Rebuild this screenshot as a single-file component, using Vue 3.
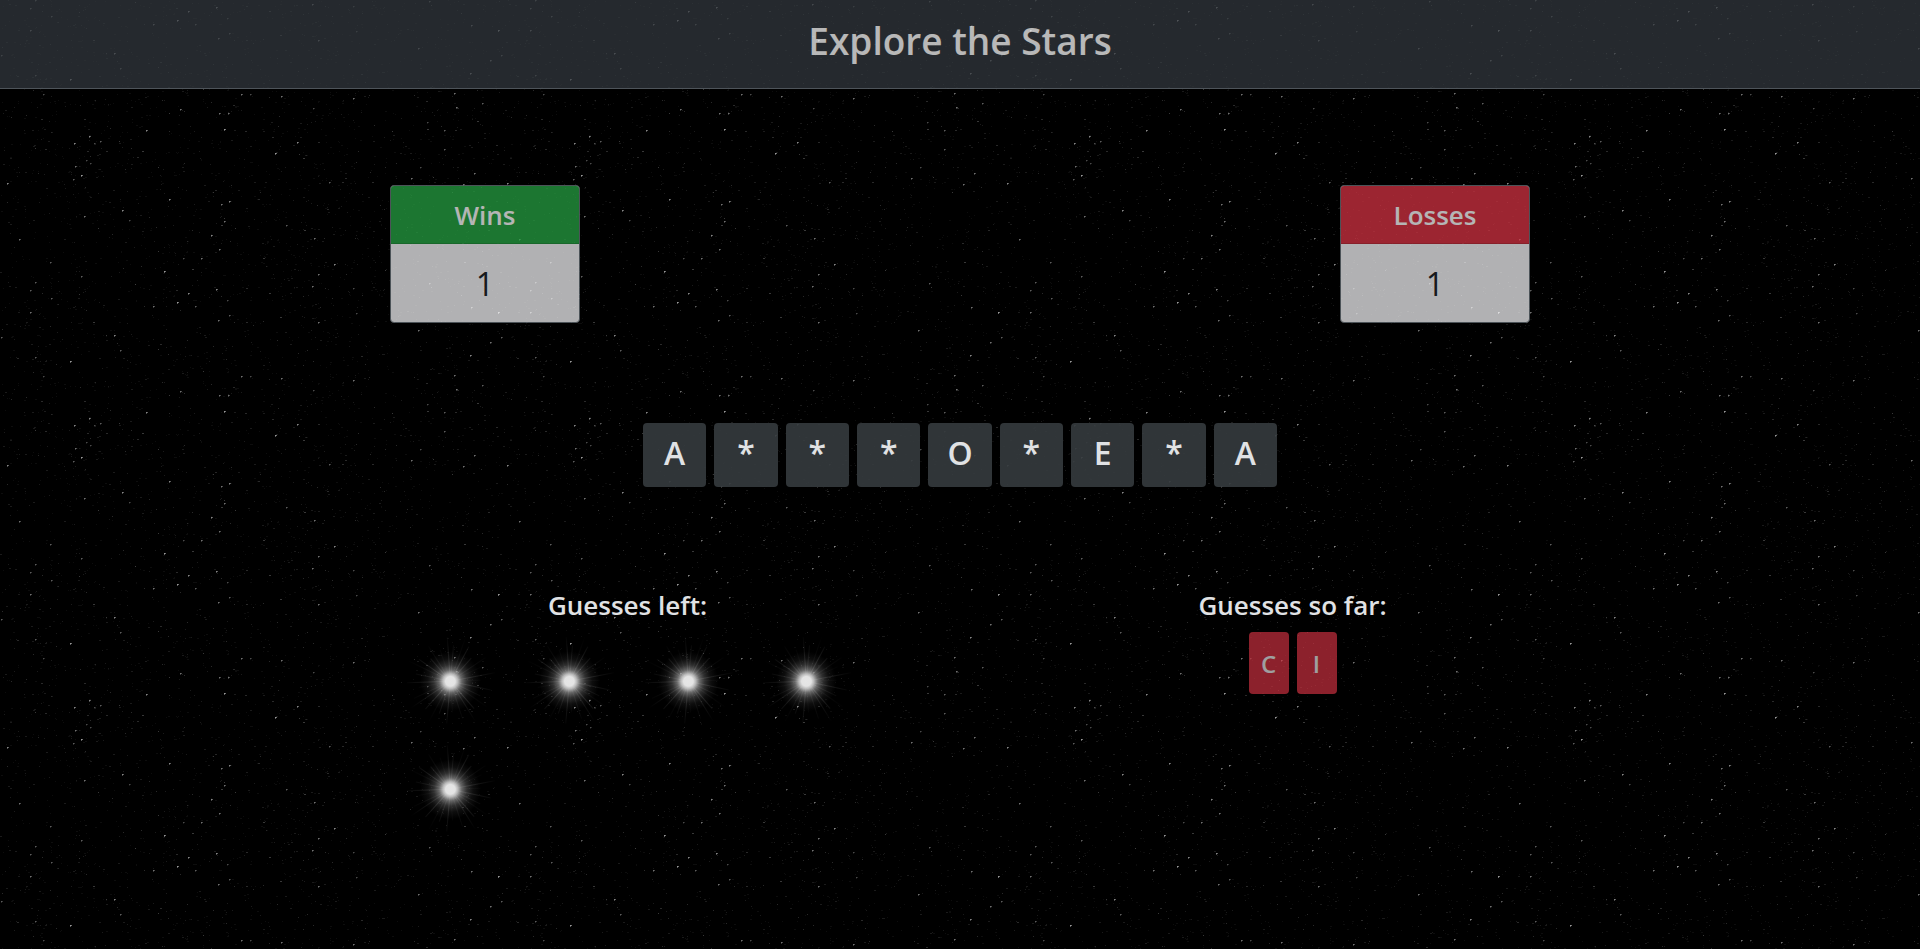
<script setup>
const TILE_W = 500
const TILE_H = 282

// Brightest points of the sky tile: x, y, strength
const bright = [
  [43, 94, 4], [241, 94, 6], [250, 94, 4], [281, 96, 6], [180, 109, 6], [219, 113, 6], [228, 113, 6],
  [224, 129, 8], [146, 130, 7], [89, 136, 7], [74, 143, 7], [100, 141, 5], [94, 143, 4], [297, 142, 7],
  [275, 153, 8], [81, 175, 8], [75, 166, 6], [86, 160, 4], [90, 163, 4], [73, 179, 5], [7, 183, 7],
  [169, 199, 7], [229, 201, 7], [221, 204, 6], [122, 210, 7], [84, 216, 6], [129, 220, 4], [224, 221, 6],
  [286, 225, 5], [211, 235, 7], [19, 239, 6], [219, 249, 6], [201, 258, 6], [183, 258, 4], [50, 262, 5],
  [164, 271, 8], [81, 276, 5], [35, 0, 5], [30, 8, 5], [51, 16, 5], [188, 11, 7], [216, 7, 7],
  [177, 20, 8], [153, 24, 6], [195, 24, 5], [227, 18, 4], [30, 30, 6], [218, 38, 6], [229, 33, 5],
  [114, 53, 7], [1, 55, 5], [120, 68, 5], [35, 75, 5], [70, 79, 8], [329, 182, 5], [427, 122, 4],
  [444, 130, 5], [456, 107, 6], [482, 103, 5], [454, 93, 6], [353, 98, 6], [313, 108, 4], [444, 149, 5],
  [474, 173, 6], [411, 178, 6], [314, 238, 6], [334, 264, 7], [318, 274, 6], [312, 4, 6],
  [353, 6, 4], [471, 25, 6], [498, 30, 8], [490, 60, 6], [470, 73, 7], [418, 48, 6], [318, 40, 6],
  [356, 31, 4], [429, 1, 5], [463, 184, 6], [420, 167, 4]
]

function randomFrom(seed) {
  let s = seed
  return () => {
    s = (s * 1664525 + 1013904223) % 4294967296
    return s / 4294967296
  }
}

const levels = Array.from({ length: 9 }, () => '')
const dot = (x, y, w, h) => `M${x} ${y}h${w}v${h}h-${w}z`

const random = randomFrom(20)
for (let i = 0; i < 2000; i++) {
  const x = Math.floor(random() * TILE_W)
  const y = Math.floor(random() * TILE_H)
  const r = random()
  const level = r < 0.72 ? 0 : r < 0.93 ? 1 : r < 0.985 ? 2 : 3
  levels[level] += dot(x, y, random() < 0.3 ? 2 : 1, 1)
}
for (const [x, y, b] of bright) {
  levels[b] += dot(x, y, 1, 1)
  levels[b - 2] += dot(x + 1, y, 1, 1)
  levels[b - 3] += dot(x, y + 1, 1, 1)
}
const opacities = [0.05, 0.1, 0.16, 0.22, 0.29, 0.36, 0.44, 0.52, 0.6]

const rays = Array.from({ length: 30 }, (_, i) => {
  const a = (i * 12 + ((i * 7) % 5) - 2) * Math.PI / 180
  const len = 30 + ((i * 11) % 19)
  return { x: 60 + Math.cos(a) * len, y: 54 + Math.sin(a) * len, o: 0.04 + ((i * 5) % 7) * 0.02 }
})

const scores = [
  { label: 'Wins', value: 1, kind: 'win' },
  { label: 'Losses', value: 1, kind: 'loss' }
]
const word = ['A', '*', '*', '*', 'O', '*', 'E', '*', 'A']
const guessesLeft = 5
const guessed = ['C', 'I']
</script>

<template>
  <div class="page">
    <svg class="sky" aria-hidden="true">
      <defs>
        <pattern id="tile" :width="TILE_W" :height="TILE_H" patternUnits="userSpaceOnUse">
          <g fill="#fff" shape-rendering="crispEdges">
            <path v-for="(d, i) in levels" :key="i" :d="d" :fill-opacity="opacities[i]" />
          </g>
        </pattern>
        <radialGradient id="glow">
          <stop offset="0" stop-color="#e6e6e6" />
          <stop offset="0.16" stop-color="#e4e4e4" />
          <stop offset="0.25" stop-color="#cccccc" stop-opacity="0.9" />
          <stop offset="0.38" stop-color="#b4b4b4" stop-opacity="0.56" />
          <stop offset="0.55" stop-color="#a0a0a0" stop-opacity="0.29" />
          <stop offset="0.75" stop-color="#909090" stop-opacity="0.1" />
          <stop offset="1" stop-color="#808080" stop-opacity="0" />
        </radialGradient>
        <radialGradient id="ray" gradientUnits="userSpaceOnUse" cx="60" cy="54" r="48">
          <stop offset="0" stop-color="#fff" />
          <stop offset="0.4" stop-color="#fff" stop-opacity="0.8" />
          <stop offset="1" stop-color="#fff" stop-opacity="0" />
        </radialGradient>
      </defs>
      <rect width="100%" height="100%" fill="url(#tile)" />
    </svg>

    <header class="banner">
      <h1>Explore the Stars</h1>
    </header>

    <main class="container">
      <section class="scores">
        <article v-for="s in scores" :key="s.label" class="card">
          <h2 :class="['card-head', s.kind]">{{ s.label }}</h2>
          <p class="card-body">{{ s.value }}</p>
        </article>
      </section>

      <section class="word">
        <span v-for="(c, i) in word" :key="i" class="letter">{{ c }}</span>
      </section>

      <section class="guesses">
        <div class="left">
          <h2>Guesses left:</h2>
          <div class="stars">
            <svg v-for="n in guessesLeft" :key="n" viewBox="0 0 118 107" aria-hidden="true">
              <line v-for="(r, i) in rays" :key="i" x1="60" y1="54" :x2="r.x" :y2="r.y" stroke="url(#ray)" :stroke-opacity="r.o" />
              <circle cx="60" cy="54" r="30" fill="url(#glow)" />
            </svg>
          </div>
        </div>
        <div class="used">
          <h2>Guesses so far:</h2>
          <div class="badges">
            <span v-for="g in guessed" :key="g" class="badge">{{ g }}</span>
          </div>
        </div>
      </section>
    </main>
  </div>
</template>

<style>
body {
  margin: 0;
  background: #000;
}
</style>

<style scoped>
.page {
  position: relative;
  min-height: 100vh;
  box-sizing: border-box;
  background: #000;
  font-family: "Open Sans", "Noto Sans", sans-serif;
  color: #e0e2e4;
}
.sky {
  position: absolute;
  inset: 0;
  width: 100%;
  height: 100%;
}
.banner {
  position: relative;
  padding: 17px 16px 23px;
  background: #343a40;
  border-bottom: 1px solid #6c757d;
  opacity: 0.72;
  text-align: center;
}
h1, h2, p {
  margin: 0;
}
h1 {
  font-size: 37px;
  line-height: 48px;
  font-weight: 600;
  color: #fff;
}
h2 {
  font-size: 26px;
  line-height: 34px;
  font-weight: 600;
}
.container {
  position: relative;
  max-width: 1140px;
  margin: 0 auto;
  padding-top: 96px;
}
.scores {
  display: flex;
  justify-content: space-between;
}
.card {
  width: 190px;
  box-sizing: border-box;
  border: 1px solid #6c757d;
  border-radius: 4px;
  overflow: hidden;
  opacity: 0.71;
  text-align: center;
  background: #fafafc;
}
.card-head {
  padding: 12px 0 11px;
  color: #fff;
  border-bottom: 1px solid rgba(0, 0, 0, 0.13);
}
.win {
  background: #28a745;
}
.loss {
  background: #dc3545;
}
.card-body {
  padding: 21px 0 19px;
  font-size: 32px;
  line-height: 38px;
  color: #212529;
}
.word {
  display: grid;
  grid-template-columns: repeat(9, 1fr);
  gap: 8px;
  max-width: 634px;
  margin: 100px auto 0;
}
.letter {
  height: 64px;
  border-radius: 4px;
  background: rgba(52, 57, 61, 0.92);
  font-size: 32px;
  line-height: 60px;
  font-weight: 600;
  text-align: center;
}
.guesses {
  display: flex;
  justify-content: space-between;
  margin-top: 101px;
  text-align: center;
}
.left, .used {
  width: 475px;
}
.stars {
  display: grid;
  grid-template-columns: repeat(4, 1fr);
  margin-top: 5px;
}
.stars svg {
  display: block;
  width: 100%;
}
.badges {
  display: flex;
  justify-content: center;
  gap: 8px;
  margin-top: 10px;
}
.badge {
  width: 40px;
  height: 62px;
  border-radius: 4px;
  background: #dc3545;
  opacity: 0.64;
  color: #f8f9fa;
  font-size: 24px;
  line-height: 64px;
  font-weight: 600;
}
</style>
